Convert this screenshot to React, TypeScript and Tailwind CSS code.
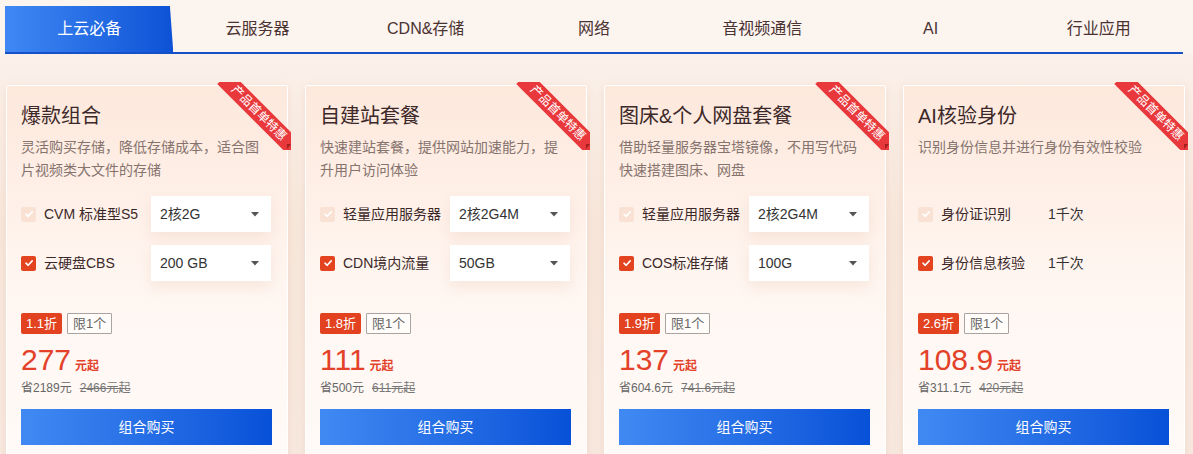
import React from "react";

type Item = { label: string; value: string; select: boolean };
type Pack = {
  title: string;
  desc: string;
  items: Item[];
  discount: string;
  price: string;
  save: string;
  old: string;
};

const tabs = ["上云必备", "云服务器", "CDN&存储", "网络", "音视频通信", "AI", "行业应用"];

const packs: Pack[] = [
  {
    title: "爆款组合",
    desc: "灵活购买存储，降低存储成本，适合图片视频类大文件的存储",
    items: [
      { label: "CVM 标准型S5", value: "2核2G", select: true },
      { label: "云硬盘CBS", value: "200 GB", select: true },
    ],
    discount: "1.1折",
    price: "277",
    save: "省2189元",
    old: "2466元起",
  },
  {
    title: "自建站套餐",
    desc: "快速建站套餐，提供网站加速能力，提升用户访问体验",
    items: [
      { label: "轻量应用服务器", value: "2核2G4M", select: true },
      { label: "CDN境内流量", value: "50GB", select: true },
    ],
    discount: "1.8折",
    price: "111",
    save: "省500元",
    old: "611元起",
  },
  {
    title: "图床&个人网盘套餐",
    desc: "借助轻量服务器宝塔镜像，不用写代码快速搭建图床、网盘",
    items: [
      { label: "轻量应用服务器", value: "2核2G4M", select: true },
      { label: "COS标准存储", value: "100G", select: true },
    ],
    discount: "1.9折",
    price: "137",
    save: "省604.6元",
    old: "741.6元起",
  },
  {
    title: "AI核验身份",
    desc: "识别身份信息并进行身份有效性校验",
    items: [
      { label: "身份证识别", value: "1千次", select: false },
      { label: "身份信息核验", value: "1千次", select: false },
    ],
    discount: "2.6折",
    price: "108.9",
    save: "省311.1元",
    old: "420元起",
  },
];

const CheckBox = ({ on }: { on: boolean }) => (
  <span
    className={`w-[15px] h-[15px] rounded-[2px] flex items-center justify-center shrink-0 ${
      on ? "bg-[#e4431f]" : "bg-[#f9e2d4]"
    }`}
  >
    <svg width="10" height="10" viewBox="0 0 10 10" fill="none">
      <path d="M2 5.2 L4.2 7.3 L8.2 2.9" stroke="white" strokeWidth="1.6" strokeLinecap="round" strokeLinejoin="round" />
    </svg>
  </span>
);

// corner ribbon, clipped by its wrapper
const Ribbon = () => (
  <div className="absolute top-[-4px] right-[-4px] w-[76px] h-[68px] overflow-hidden pointer-events-none">
    <div className="absolute left-[-6px] top-[22px] w-[100px] h-[18px] rotate-45 bg-[#e8383b] flex items-center justify-center">
      <span className="text-white text-[12px] leading-none">产品首单特惠</span>
    </div>
  </div>
);

const Card = ({ pack }: { pack: Pack }) => (
  <div className="relative w-[282px] shrink-0 h-[400px] border border-white rounded-[2px] bg-gradient-to-b from-[#fde8dc] via-[#fff6f1] to-[#fffbf9] shadow-[0_2px_10px_rgba(220,170,140,0.25)] px-[14px] pt-[16px]">
    <Ribbon />
    <div className="absolute right-[-4px] top-[58px] w-0 h-0 border-l-[4px] border-l-[#a3201f] border-b-[5px] border-b-transparent" />
    <div className="text-[20px] leading-[28px] text-[#3c2828]">{pack.title}</div>
    <div className="mt-[6px] w-[245px] h-[46px] text-[14px] leading-[23px] text-[#86736e]">{pack.desc}</div>
    <div className="mt-[14px] flex flex-col gap-[13px]">
      {pack.items.map((it, i) => (
        <div key={i} className="flex items-center h-[36px]">
          <div className="w-[130px] flex items-center gap-[8px] shrink-0">
            <CheckBox on={i === 1} />
            <span className="text-[14px] text-[#3c2828] whitespace-nowrap">{it.label}</span>
          </div>
          {it.select ? (
            <div className="w-[120px] h-[36px] bg-white flex items-center justify-between pl-[9px] pr-[12px] shadow-[0_6px_14px_rgba(210,160,130,0.18)]">
              <span className="text-[14px] text-[#333]">{it.value}</span>
              <svg width="8" height="5" viewBox="0 0 8 5">
                <path d="M0 0 L8 0 L4 4.5 Z" fill="#555" />
              </svg>
            </div>
          ) : (
            <span className="text-[14px] text-[#333]">{it.value}</span>
          )}
        </div>
      ))}
    </div>
    <div className="mt-[32px] flex items-center gap-[5px]">
      <span className="h-[21px] px-[5px] flex items-center bg-[#e2421f] text-white text-[13px] rounded-[2px]">{pack.discount}</span>
      <span className="h-[21px] px-[5px] flex items-center border border-[#a9a3a1] text-[#666] text-[13px] rounded-[1px] bg-white/60">限1个</span>
    </div>
    <div className="mt-[9px] flex items-baseline h-[34px] leading-[34px] text-[#e3412a]">
      <span className="text-[30px]">{pack.price}</span>
      <span className="ml-[4px] text-[12px] font-bold">元起</span>
    </div>
    <div className="mt-[2px] h-[18px] leading-[18px] text-[12px] text-[#666] flex gap-[8px]">
      <span>{pack.save}</span>
      <span className="line-through text-[#777]">{pack.old}</span>
    </div>
    <button className="mt-[12px] w-[251px] h-[36px] bg-gradient-to-r from-[#4189f2] to-[#0751d8] text-white text-[14px] flex items-center justify-center">
      组合购买
    </button>
  </div>
);

export default function App() {
  return (
    <div className="w-[1193px] h-[454px] overflow-hidden bg-gradient-to-b from-[#fcf4ef] via-[#f8e7dc] to-[#f8e9e0] font-['Liberation_Sans','Noto_Sans_CJK_SC',sans-serif]">
      <div className="pt-[6px] bg-[#fcf4ef]">
        <div className="ml-[5px] w-[1178px] flex border-b-2 border-[#1650c6]">
          {tabs.map((t, i) => (
            <div
              key={t}
              className={`flex-1 h-[46px] flex items-center justify-center text-[16px] ${
                i === 0
                  ? "text-white bg-gradient-to-r from-[#3f88f4] to-[#0d52d6] [clip-path:polygon(0_0,98%_0,100%_100%,0_100%)]"
                  : "text-[#4a3232]"
              }`}
            >
              {t}
            </div>
          ))}
        </div>
      </div>
      <div className="mt-[31px] ml-[6px] flex gap-[17px]">
        {packs.map((p) => (
          <Card key={p.title} pack={p} />
        ))}
      </div>
    </div>
  );
}
